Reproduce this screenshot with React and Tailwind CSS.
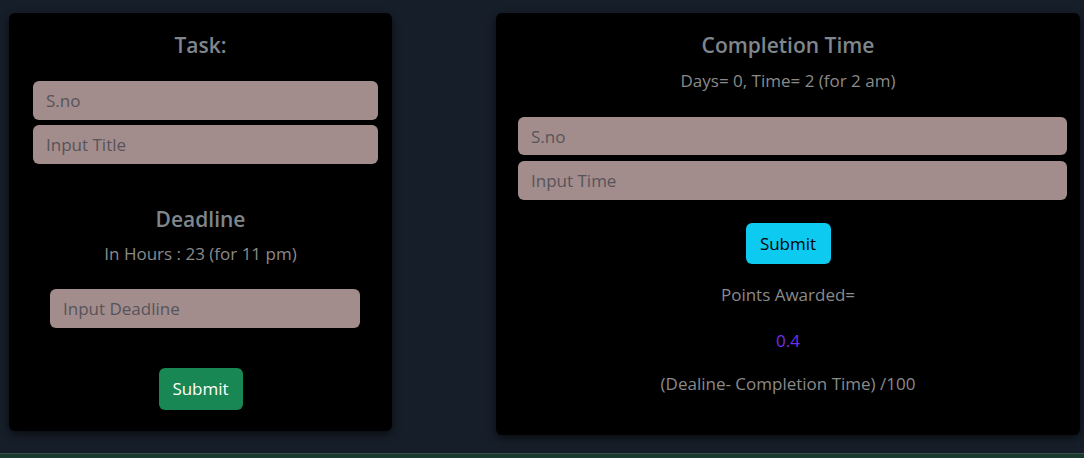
export default function App() {
  return (
    <div className="flex min-h-[458px] flex-col bg-[#161e29] font-['Open_Sans',sans-serif]">
      <div className="flex flex-1 items-start pl-[9px] pt-[13px]">
        {/* task card */}
        <div className="flex w-[383px] flex-col rounded-[6px] bg-black px-6 pb-[21px] pt-[18px] shadow-[0_3px_8px_rgba(0,0,0,0.6)]">
          <h2 className="text-center text-[21px] font-semibold leading-[28px] text-[#7f868c]">Task:</h2>
          <div className="mt-[22px] flex w-[345px] flex-col gap-[5px]">
            <input placeholder="S.no" className="h-[39px] rounded-[6px] bg-[#a38c8c] px-[13px] text-[17px] text-[#555] outline-none placeholder:text-[#56545a]" />
            <input placeholder="Input Title" className="h-[39px] rounded-[6px] bg-[#a38c8c] px-[13px] text-[17px] text-[#555] outline-none placeholder:text-[#56545a]" />
          </div>
          <h2 className="mt-[41px] text-center text-[21px] font-semibold leading-[28px] text-[#7f868c]">Deadline</h2>
          <p className="mt-[9px] text-center text-[17px] leading-[24px] text-[#8a8a8a]">In Hours : 23 (for 11 pm)</p>
          <input placeholder="Input Deadline" className="ml-[17px] mt-[23px] h-[39px] w-[310px] rounded-[6px] bg-[#a38c8c] px-[13px] text-[17px] text-[#555] outline-none placeholder:text-[#56545a]" />
          <button className="mx-auto mt-[40px] h-[42px] w-[84px] rounded-[6px] bg-[#198754] text-[17px] text-white">Submit</button>
        </div>

        {/* completion card */}
        <div className="ml-[104px] flex w-[584px] flex-col rounded-[6px] bg-black px-[22px] pb-[39px] pt-[18px] shadow-[0_3px_8px_rgba(0,0,0,0.6)]">
          <h2 className="text-center text-[21px] font-semibold leading-[28px] text-[#7f868c]">Completion Time</h2>
          <p className="mt-[10px] text-center text-[17px] leading-[24px] text-[#8a8a8a]">Days= 0, Time= 2 (for 2 am)</p>
          <div className="mt-[24px] flex w-[549px] flex-col gap-[6px]">
            <input placeholder="S.no" className="h-[38px] rounded-[6px] bg-[#a38c8c] px-[13px] text-[17px] text-[#555] outline-none placeholder:text-[#56545a]" />
            <input placeholder="Input Time" className="h-[39px] rounded-[6px] bg-[#a38c8c] px-[13px] text-[17px] text-[#555] outline-none placeholder:text-[#56545a]" />
          </div>
          <button className="mx-auto mt-[23px] h-[41px] w-[85px] rounded-[6px] bg-[#0dcaf0] text-[17px] text-black">Submit</button>
          <p className="mt-[19px] text-center text-[17px] leading-[24px] text-[#8a8a8a]">Points Awarded=</p>
          <p className="mt-[22px] text-center text-[17px] leading-[24px] text-[#6f2ff2]">0.4</p>
          <p className="mt-[19px] text-center text-[17px] leading-[24px] text-[#8a8a8a]">(Dealine- Completion Time) /100</p>
        </div>
      </div>
      <div className="h-[5px] border-t border-[#3b5048] bg-[#1b3a2e]" />
    </div>
  )
}
